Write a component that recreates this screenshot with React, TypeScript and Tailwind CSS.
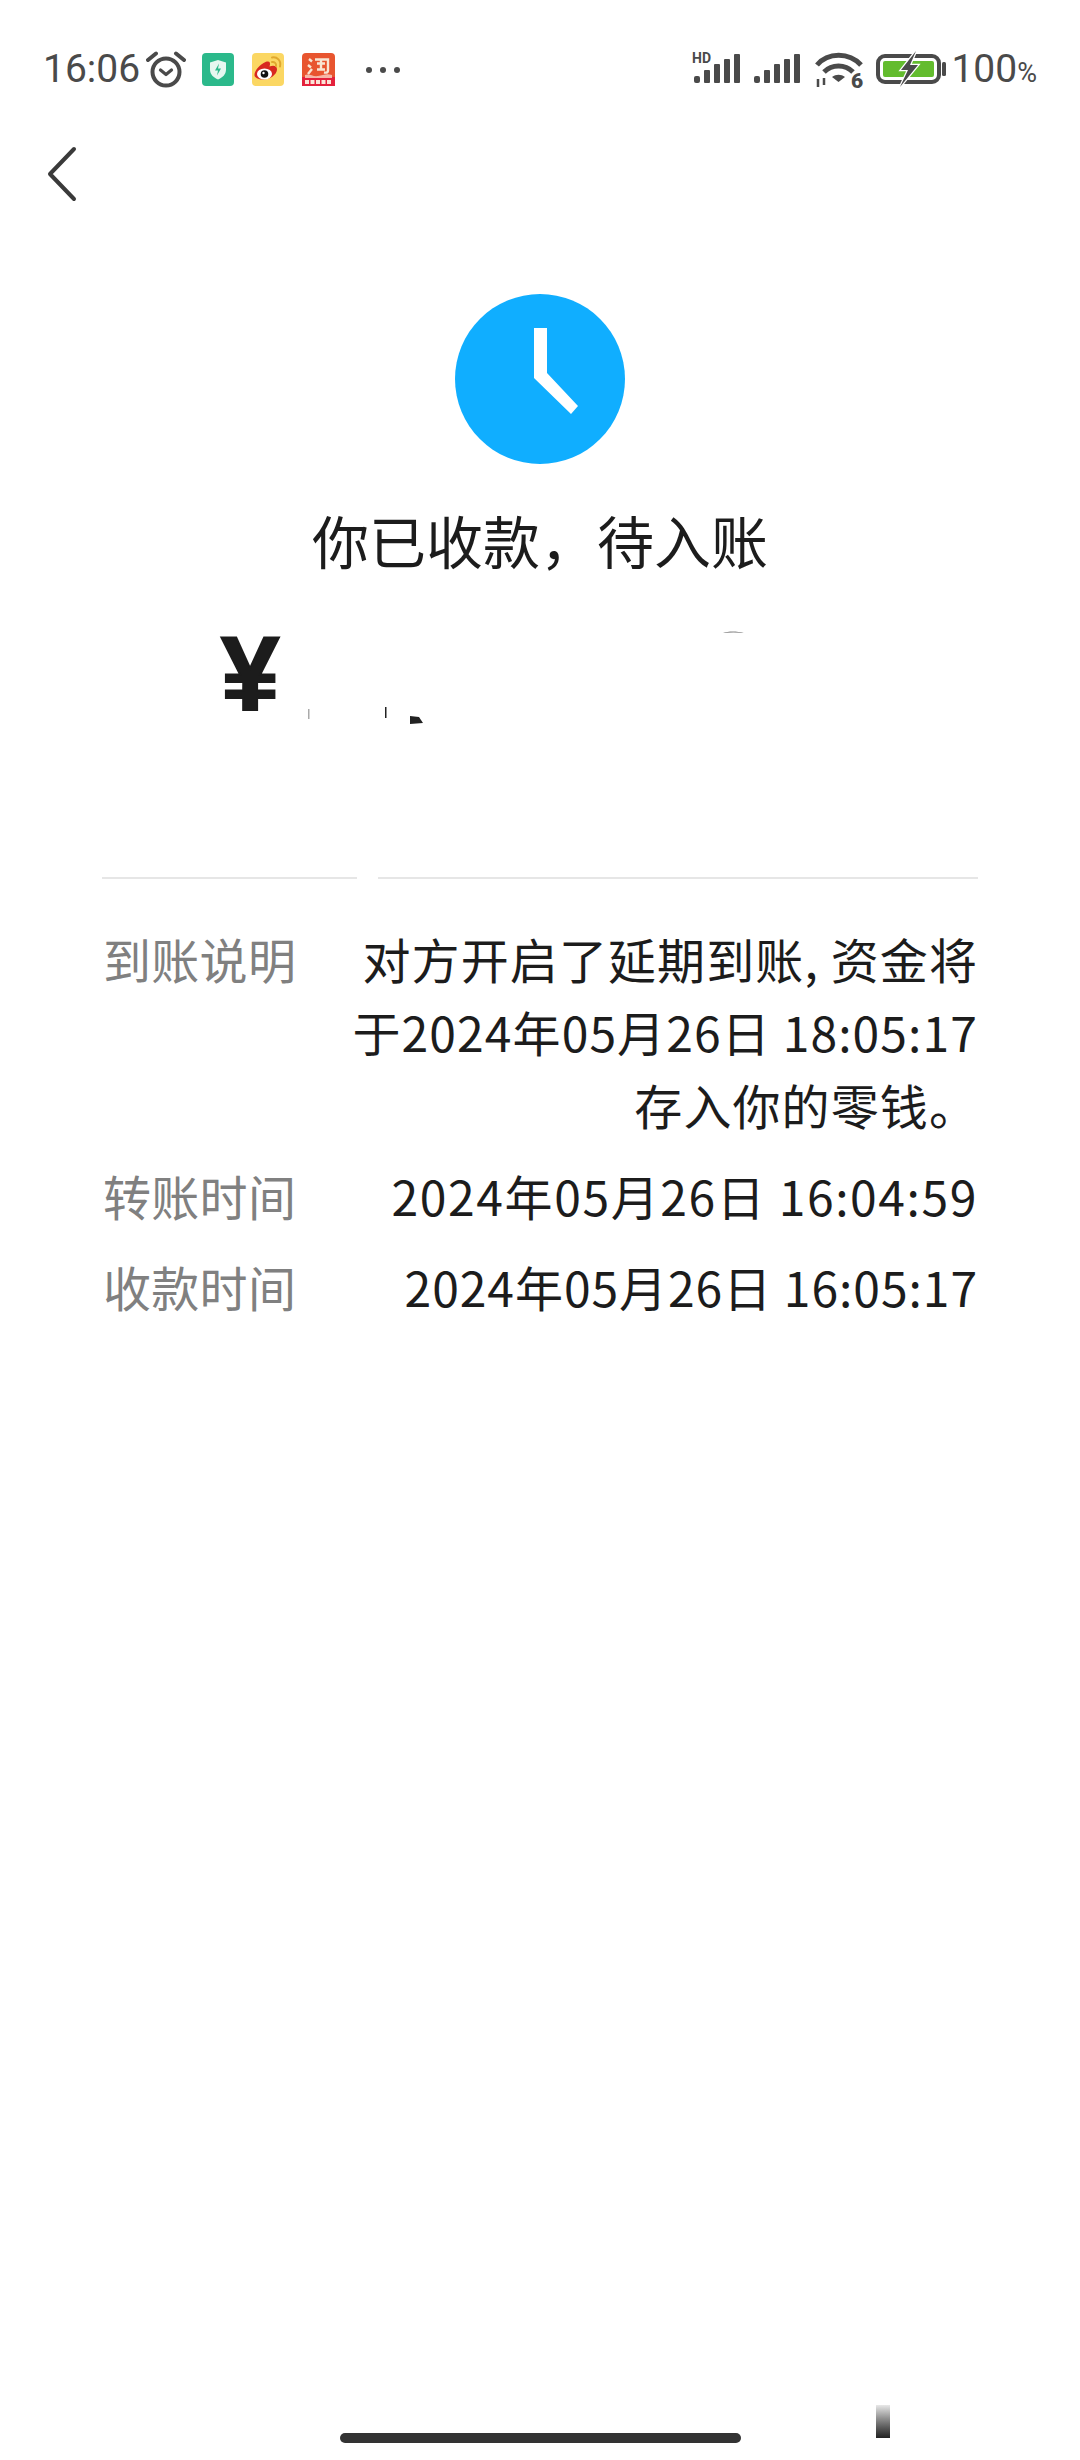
const CJK = "font-['Noto_Sans_CJK_SC','Noto_Sans',sans-serif]";

function Alarm() {
  return (
    <svg width="40" height="38" viewBox="0 0 40 38" fill="none" stroke="#4a4a4a" strokeWidth="4" strokeLinecap="round">
      <circle cx="20" cy="22" r="13.500" />
      <path d="M14.500 20l5.500 4.500 5.500-4.500" strokeWidth="3.200" strokeLinejoin="round" />
      <path d="M2 10l8-6.500M38 10l-8-6.500" />
    </svg>
  );
}

function GuardIcon() {
  return (
    <svg width="32" height="33" viewBox="0 0 32 33">
      <rect width="32" height="33" rx="4" fill="#2bb98b" />
      <path d="M16 7l8 2.500v7c0 5-3.500 8-8 10-4.500-2-8-5-8-10v-7z" fill="#e6f7f0" />
      <path d="M17 10.500l-4 7h3l-1 5 4-7h-3z" fill="#2bb98b" />
    </svg>
  );
}

function WeiboIcon() {
  return (
    <svg width="32" height="33" viewBox="0 0 32 33">
      <rect width="32" height="33" rx="4" fill="#fbd763" />
      <path d="M2.500 22c0-5 6-11 11-13 4-1.500 5.500 .5 4 4.500 4.500-1.500 7.500-.5 7.500 3 0 5-7 10-13.500 10-5.500 0-9-2-9-4.500z" fill="#d8281f" />
      <ellipse cx="12.500" cy="21" rx="7.500" ry="5.500" fill="#fff" />
      <circle cx="12.500" cy="21" r="3.800" fill="#111" />
      <circle cx="11.500" cy="20" r="1.200" fill="#fff" />
      <path d="M20 4.500c5-1 9.500 3 8 9M20 9c2.500-.5 4.500 1.500 4 4" fill="none" stroke="#e0a82e" strokeWidth="2" strokeLinecap="round" />
    </svg>
  );
}

function TaobaoIcon() {
  return (
    <svg width="33" height="33" viewBox="0 0 33 33">
      <rect width="33" height="33" rx="4" fill="#e8552f" />
      <rect y="24" width="33" height="9" fill="#e4213c" />
      <path d="M3 22c4-2 8 2 13 1s9-3 14-1v3H3z" fill="#f6b7a8" />
      <path d="M7 6l3 2.500M6 12l3 2.500M6 21l4-5M13 6.500h13v11c0 2-1 2.500-4 2M15 10.500h8M19 6.500v10M15 16.500h8" fill="none" stroke="#f8e6d4" strokeWidth="2.400" />
      <path d="M3 29h27" stroke="#fbe3d6" strokeWidth="4" strokeDasharray="4 1.500" />
    </svg>
  );
}

function Signal({ hd }: { hd?: boolean }) {
  return (
    <svg className="overflow-visible" width="50" height="32" viewBox="0 0 50 32" fill="#4a4a4a">
      {hd && <text x="0" y="11" fontSize="14" fontWeight="700" fontFamily="Roboto, sans-serif">HD</text>}
      <rect x="2" y="24" width="6" height="7" rx="2" />
      <rect x="12" y="18" width="6" height="13" rx="1" />
      <rect x="22" y="12" width="6" height="19" rx="1" />
      <rect x="32" y="7" width="6" height="24" rx="1" />
      <rect x="42" y="2" width="6" height="29" rx="1" />
    </svg>
  );
}

function Wifi() {
  return (
    <svg width="50" height="46" viewBox="0 -4 50 46" fill="none" stroke="#4a4a4a">
      <path d="M2 14C13 1 34 1 46 14" strokeWidth="5" />
      <path d="M9 21c8-8 21-8 29 0" strokeWidth="5" />
      <path d="M17 26c4-3 9-3 13 0l-6.500 5z" fill="#4a4a4a" strokeWidth="0" />
      <path d="M3 28v8M9 27v7" strokeWidth="2.500" />
      <text x="36" y="37" fontSize="21" fontWeight="900" fill="#4a4a4a" stroke="none" fontFamily="Roboto, sans-serif">6</text>
    </svg>
  );
}

function Battery() {
  return (
    <svg width="70" height="36" viewBox="0 0 70 36">
      <rect x="2" y="5" width="61" height="26" rx="7" fill="none" stroke="#4a4a4a" strokeWidth="4" />
      <rect x="7" y="10" width="51" height="16" rx="2" fill="#63bc2e" />
      <path d="M40 0L25 19h7l-8 17 18-22h-8z" fill="#4a4a4a" stroke="#fff" strokeWidth="2.500" paintOrder="stroke" />
      <rect x="66" y="11" width="4" height="14" rx="1.500" fill="#4a4a4a" />
    </svg>
  );
}

function StatusBar() {
  return (
    <div className="flex h-[68px] items-center pl-[43px] pr-[43px] pt-[3px] text-[#4a4a4a]">
      <span className="font-['Roboto',sans-serif] text-[39px] leading-none">16:06</span>
      <div className="ml-[6px] mb-[2px]">
        <Alarm />
      </div>
      <div className="ml-[16px] flex gap-[18px]">
        <GuardIcon />
        <WeiboIcon />
        <TaobaoIcon />
      </div>
      <div className="ml-[31px] flex gap-[8px]">
        <span className="h-[6px] w-[6px] rounded-full bg-[#4a4a4a]" />
        <span className="h-[6px] w-[6px] rounded-full bg-[#4a4a4a]" />
        <span className="h-[6px] w-[6px] rounded-full bg-[#4a4a4a]" />
      </div>
      <div className="ml-auto flex items-center">
        <div className="mb-[3px] flex gap-[10px]">
          <Signal hd />
          <Signal />
        </div>
        <div className="ml-[13px]">
          <Wifi />
        </div>
        <div className="ml-[11px] mb-[2px]">
          <Battery />
        </div>
        <span className="ml-[5px] font-['Roboto',sans-serif] text-[39px] leading-none">
          100<span className="text-[27px]">%</span>
        </span>
      </div>
    </div>
  );
}

function DetailRow({ label, children }: { label: string; children: React.ReactNode }) {
  return (
    <div className="flex justify-between">
      <span className="w-[200px] shrink-0 tracking-[0.3px] text-[#808080]">{label}</span>
      <div className="text-right text-[#1c1c1c]">{children}</div>
    </div>
  );
}

export default function App() {
  return (
    <div className={`relative flex h-[2460px] w-[1080px] flex-col overflow-hidden bg-white pt-[34px] ${CJK}`}>
      <StatusBar />
      <div className="mt-[44px] pl-[47px]">
        <svg width="30" height="56" viewBox="0 0 30 56" fill="none" stroke="#3a3a3a" strokeWidth="4" strokeLinecap="round" strokeLinejoin="round">
          <path d="M27 3L3 28l24 25" />
        </svg>
      </div>

      <div className="mt-[92px] flex justify-center">
        <div className="h-[170px] w-[170px] rounded-full bg-[#10aeff]">
          <svg width="170" height="170" viewBox="0 0 170 170" fill="#fff">
            <path d="M79 34h13v45l31 33-7 8-37-36z" />
          </svg>
        </div>
      </div>

      <h1 className="mt-[30px] text-center text-[57px] font-normal leading-[90px] text-[#1c1c1c]">
        你已收款，待入账
      </h1>

      <div className="relative mt-[40px] h-[219px] pl-[221px]">
        <span className="font-['Liberation_Sans',sans-serif] text-[105px] font-bold leading-[100px] text-[#1c1c1c] [-webkit-text-stroke:2px_#1c1c1c]">¥</span>
        {/* what is left of the blanked-out amount */}
        <svg className="absolute left-[300px] top-[0px]" width="460" height="110" viewBox="300 625 460 110" fill="#222">
          <path d="M308 710h1.500v10H308z" fill="#aaa" />
          <path d="M385 708l1.500 0v11H385z" />
          <path d="M410 717l9 1 4 6-13 1z" />
          <path d="M723 634c5-2 14-2 21 0-7-.8-14-.8-21 0z" fill="#888" />
        </svg>
      </div>

      <div className="mt-[34px] flex gap-[21px] px-[102px]">
        <div className="h-[2px] w-[255px] bg-[#e6e6e6]" />
        <div className="h-[2px] flex-1 bg-[#e6e6e6]" />
      </div>

      <div className="mt-[43px] flex flex-col gap-[18px] pl-[103px] pr-[102px] text-[48px] leading-[73px]">
        <DetailRow label="到账说明">
          <div className="tracking-[1.1px]">对方开启了延期到账, 资金将</div>
          <div className="tracking-[1.1px]">于2024年05月26日 18:05:17</div>
          <div className="tracking-[1.1px]">存入你的零钱。</div>
        </DetailRow>
        <DetailRow label="转账时间">
          <span className="tracking-[1.6px]">2024年05月26日 16:04:59</span>
        </DetailRow>
        <DetailRow label="收款时间">
          <span className="tracking-[0.95px]">2024年05月26日 16:05:17</span>
        </DetailRow>
      </div>

      <div className="mt-auto mb-[17px] ml-[340px] h-[10px] w-[401px] rounded-full bg-[#333333]" />
      <div className="absolute left-[876px] top-[2405px] h-[33px] w-[14px] bg-gradient-to-b from-[#e8e8e8] to-[#222222]" />
    </div>
  );
}
